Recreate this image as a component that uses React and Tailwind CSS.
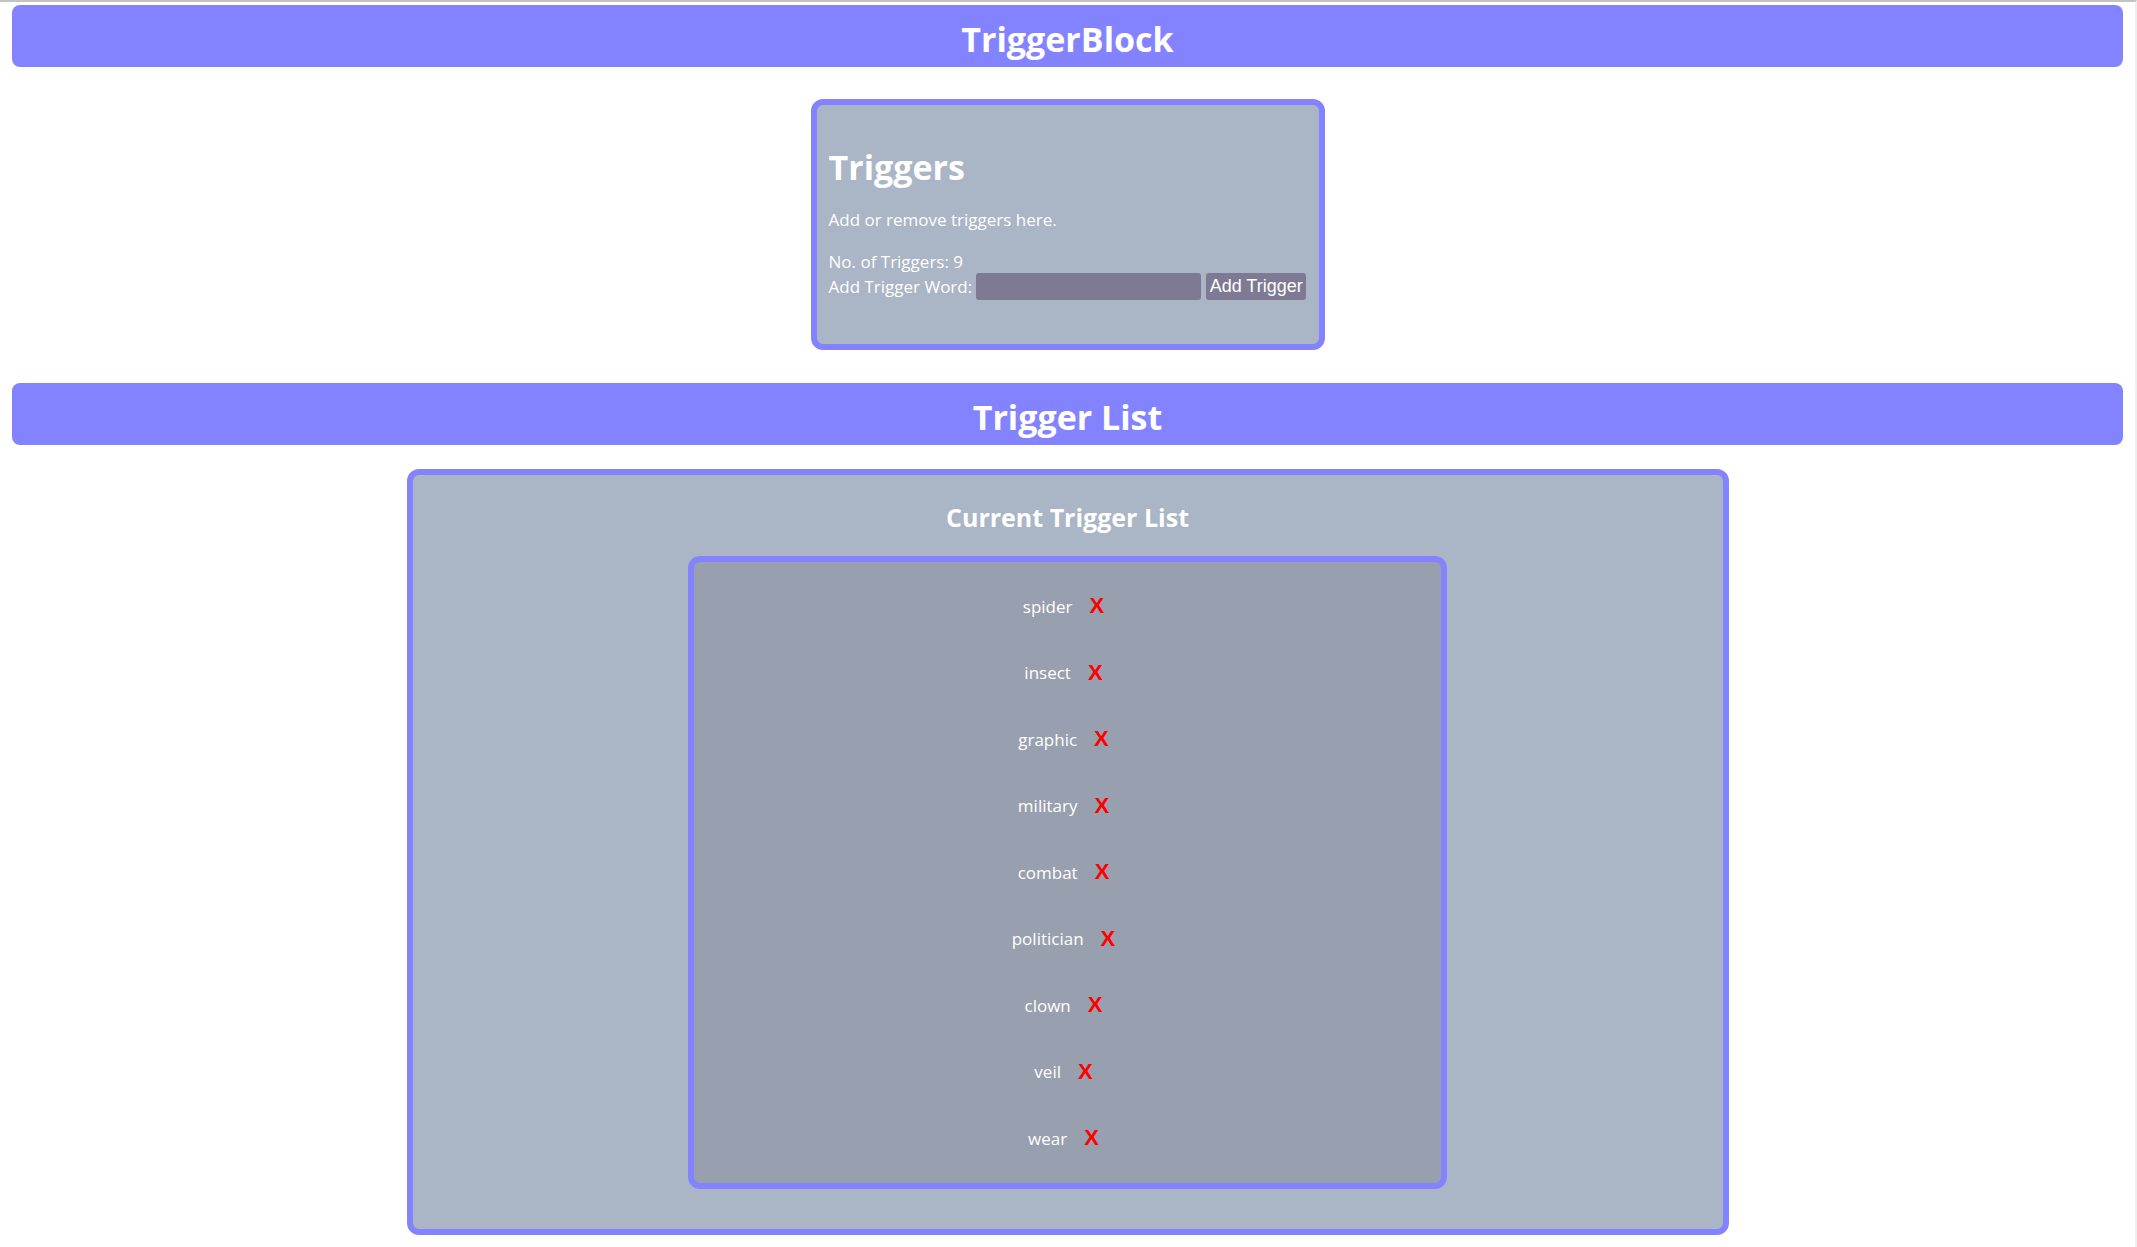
// TriggerBlock options page
import { useState } from "react";

const TRIGGERS = [
  "spider",
  "insect",
  "graphic",
  "military",
  "combat",
  "politician",
  "clown",
  "veil",
  "wear",
];

function SectionHeader({ title }) {
  return (
    <div className="h-[62px] rounded-lg bg-[#8383ff] flex items-center justify-center pt-[5px]">
      <h1 className="text-[34px] font-bold leading-none text-white">{title}</h1>
    </div>
  );
}

export default function App() {
  const [triggers, setTriggers] = useState(TRIGGERS);
  const [word, setWord] = useState("");

  const addTrigger = () => {
    if (!word.trim()) return;
    setTriggers([...triggers, word.trim()]);
    setWord("");
  };

  const removeTrigger = (i) => {
    setTriggers(triggers.filter((_, idx) => idx !== i));
  };

  return (
    <div className="min-h-screen bg-white border-t-2 border-t-[#c3c3c3] border-r-2 border-r-[#efefef] pl-3 pr-3 pt-[3px] pb-6 font-['Open_Sans',sans-serif] text-white">
      {/* Header */}
      <SectionHeader title="TriggerBlock" />

      {/* Triggers card */}
      <div className="mt-8 mx-auto w-[514px] h-[251px] rounded-xl border-[6px] border-[#8383ff] bg-[#aab5c5] pl-3 pr-2 pt-[40px]">
        <h2 className="text-[34px] font-bold leading-[44px]">Triggers</h2>
        <p className="mt-[19px] text-[17px] leading-[24px]">Add or remove triggers here.</p>
        <p className="mt-[18px] text-[17px] leading-[23px]">No. of Triggers: {triggers.length}</p>
        <div className="flex items-center h-[27px]">
          <span className="text-[17px] leading-[24px]">Add Trigger Word:</span>
          <input
            type="text"
            value={word}
            onChange={(e) => setWord(e.target.value)}
            className="ml-1 w-[225px] h-[27px] rounded-[3px] bg-[#7e7a93] text-white px-1 outline-none"
          />
          <button
            onClick={addTrigger}
            className="ml-[5px] w-[100px] h-[27px] rounded-[3px] bg-[#7e7a93] flex items-center justify-center font-['Liberation_Sans',Arial,sans-serif] text-[18px] text-white"
          >
            Add Trigger
          </button>
        </div>
      </div>

      {/* Trigger list header */}
      <div className="mt-[33px]">
        <SectionHeader title="Trigger List" />
      </div>

      {/* Trigger list card */}
      <div className="mt-6 mx-auto w-[1322px] h-[766px] rounded-xl border-[6px] border-[#8383ff] bg-[#aab5c5] pt-[26px]">
        <h2 className="text-center text-[25px] font-bold leading-[32px]">Current Trigger List</h2>
        <ul className="mt-[23px] mx-auto w-[759px] h-[633px] rounded-xl border-[6px] border-[#8383ff] bg-[#989fae] py-[11px]">
          {triggers.map((t, i) => (
            <li key={t + i} className="h-[66.5px] flex items-center justify-center">
              <span className="text-[17px]">{t}</span>
              <button
                onClick={() => removeTrigger(i)}
                className="ml-[9px] px-2 font-['Liberation_Sans',Arial,sans-serif] text-[22px] font-bold text-[#ff0000] leading-none"
              >
                X
              </button>
            </li>
          ))}
        </ul>
      </div>
    </div>
  );
}
